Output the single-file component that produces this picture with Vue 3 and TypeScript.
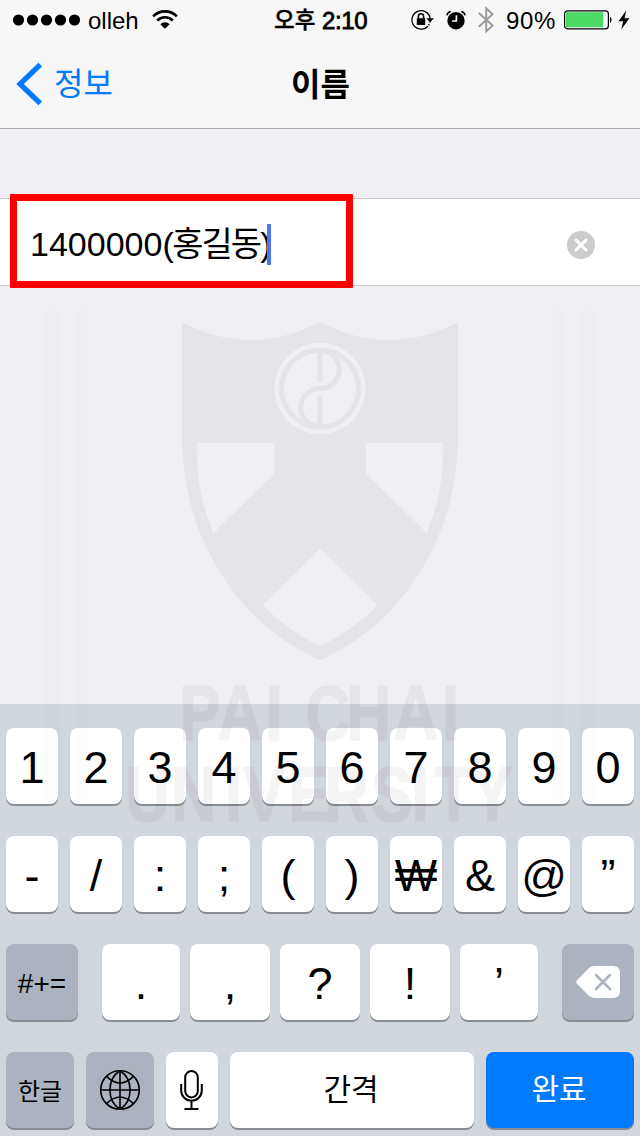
<script setup lang="ts">
interface Key {
  label: string
  width: number
}

interface Run {
  text: string
  kind: string
}

const deviceName: Run[] = [
  { text: '1400000', kind: 'number' },
  { text: '(', kind: 'paren' },
  { text: '홍길동', kind: 'korean' },
  { text: ')', kind: 'paren' },
]
const digits: string[] = ['1', '2', '3', '4', '5', '6', '7', '8', '9', '0']
const symbols: string[] = ['-', '/', ':', ';', '(', ')', '₩', '&', '@', '”']
const punctuation: Key[] = [
  { label: '.', width: 78 },
  { label: ',', width: 80 },
  { label: '?', width: 80 },
  { label: '!', width: 80 },
  { label: '’', width: 78 },
]

// The crest lettering is condensed horizontally, so pen positions are divided by the same factor.
const condense = 0.8
const pen = (xs: number[]): string => xs.map((x) => (x / condense).toFixed(1)).join(' ')
const firstLine = pen([179.5, 217.5, 265.5, 295, 305.5, 346.5, 393.5, 442])
const secondLine = pen([125.5, 171.5, 225, 243.5, 288.5, 324.5, 371.5, 411.5, 435, 471.5])
</script>

<template>
  <div class="screen">
    <header class="top">
      <div class="status">
        <div class="status-left">
          <svg class="dots" width="70" height="12" viewBox="0 0 70 12">
            <circle v-for="n in 5" :key="n" :cx="n * 14 - 7.5" cy="6" r="5.6" />
          </svg>
          <span class="carrier">olleh</span>
          <svg class="wifi" width="26" height="20" viewBox="0 0 26 20">
            <path d="M1.2 6.4 A16.4 16.4 0 0 1 24.8 6.4" />
            <path d="M5.2 10.6 A10.8 10.8 0 0 1 20.8 10.6" />
            <path class="solid" d="M8.4 14.2 A6.4 6.4 0 0 1 17.6 14.2 L13 18.8 Z" />
          </svg>
        </div>
        <div class="clock"><span class="ko">오후</span><span class="digits">2:10</span></div>
        <div class="status-right">
          <svg class="lock" width="25" height="22" viewBox="0 0 25 22">
            <path class="ring" d="M17.9 17.1 A9.2 9.2 0 1 1 20.2 9.4" />
            <path class="ring faint" d="M18.5 16.4 A9.2 9.2 0 0 0 20.2 12" />
            <path d="M16.2 9.2 H24 L20.1 13.3 Z" />
            <rect x="6.8" y="9.2" width="8.4" height="6.8" rx="0.6" />
            <path class="shackle" d="M8.4 9.6 V7.4 A2.6 2.6 0 0 1 13.6 7.4 V9.6" />
          </svg>
          <svg class="alarm" width="20" height="20" viewBox="0 0 20 20">
            <circle cx="10" cy="10.7" r="8.7" />
            <path class="bell" d="M0.9 5.2 A5 5 0 0 1 4.7 1.5 M15.3 1.5 A5 5 0 0 1 19.1 5.2" />
            <path class="hands" d="M10.4 5.2 V11 H6" />
          </svg>
          <svg class="bluetooth" width="16" height="28" viewBox="0 0 16 28">
            <path d="M0.8 7 L14.6 19.6 L8.2 25.4 V2.2 L14.6 8.2 L0.8 20.8" />
          </svg>
          <span class="percent">90%</span>
          <svg class="battery" width="49" height="20" viewBox="0 0 49 20">
            <rect x="0.6" y="0.8" width="43.8" height="18" rx="3" />
            <rect class="charge" x="2" y="2.2" width="37.2" height="15" />
            <path class="cap" d="M46 6.5 A4.4 4.4 0 0 1 46 13.2 Z" />
          </svg>
          <svg class="bolt" width="12" height="20" viewBox="0 0 12 20">
            <path d="M8.2 0.6 L0.5 11.2 H5.2 L3.2 19.4 L11.5 8.2 H6.6 Z" />
          </svg>
        </div>
      </div>
      <nav class="nav">
        <a class="back">
          <svg width="26" height="42" viewBox="0 0 26 42">
            <path d="M23.2 1.6 L3 21 L23.2 40.4" />
          </svg>
          <span>정보</span>
        </a>
        <h1>이름</h1>
      </nav>
    </header>

    <main class="content">
      <div class="field">
        <span class="value"><span v-for="(run, i) in deviceName" :key="i" :class="run.kind">{{ run.text }}</span></span>
        <i class="caret"></i>
        <svg class="clear" width="28" height="28" viewBox="0 0 28 28">
          <circle cx="14" cy="14" r="14" />
          <path d="M9 9 L19 19 M19 9 L9 19" />
        </svg>
        <div class="highlight"></div>
      </div>
    </main>

    <section class="keyboard">
      <div class="row">
        <button v-for="d in digits" :key="d" class="key">{{ d }}</button>
      </div>
      <div class="row">
        <button v-for="s in symbols" :key="s" class="key">{{ s }}</button>
      </div>
      <div class="row spread">
        <button class="key dark mode">#+=</button>
        <div class="group">
          <button v-for="p in punctuation" :key="p.label" class="key" :style="{ width: p.width + 'px' }">{{ p.label }}</button>
        </div>
        <button class="key dark mode glyph">
          <svg width="44" height="32" viewBox="0 0 44 32">
            <path class="tag" d="M0.8 14.4 L12.6 2.4 Q15 0 18.4 0 H37 Q44 0 44 7 V25 Q44 32 37 32 H18.4 Q15 32 12.6 29.6 L0.8 17.6 Q-0.6 16 0.8 14.4 Z" />
            <path class="cross" d="M20 9 L34 23 M34 9 L20 23" />
          </svg>
        </button>
      </div>
      <div class="row">
        <button class="key dark side hangul">한글</button>
        <button class="key dark side glyph">
          <svg class="globe" width="42" height="42" viewBox="0 0 42 42">
            <circle cx="21" cy="21" r="19.3" />
            <path d="M21 1.7 V40.3 M1.7 21 H40.3" />
            <path d="M21 1.7 C7.6 10 7.6 32 21 40.3 M21 1.7 C34.4 10 34.4 32 21 40.3" />
            <path d="M7.6 7.4 Q21 20.6 34.4 7.4 M7.6 34.6 Q21 21.4 34.4 34.6" />
          </svg>
        </button>
        <button class="key glyph">
          <svg class="mic" width="24" height="42" viewBox="0 0 24 42">
            <rect x="5.2" y="2" width="12.6" height="26.4" rx="6.3" />
            <path d="M1.2 15 V21.400 A10.300 10.300 0 0 0 21.800 21.400 V15 M11.500 31.700 V40 M4.500 40 H18.500" />
          </svg>
        </button>
        <button class="key space">간격</button>
        <button class="key done">완료</button>
      </div>
    </section>

    <svg class="crest" width="640" height="560" viewBox="0 300 640 560">
      <g class="bands">
        <path d="M44 310 H62 V800 H44 Z M77 310 H87 V800 H77 Z M553 310 H563 V800 H553 Z M578 310 H596 V800 H578 Z" />
      </g>
      <path
        fill-rule="evenodd"
        d="M182 322 Q251 358 320 322 Q389 358 458 322 V436 C458 535 405 622 320 660.5 C235 622 182 535 182 436 Z
           M197 443 H274.5 V473.5 L213.5 533 C202 506 196 478 197 443 Z
           M443 443 H366 V473.5 L426.5 533 C438 506 444 478 443 443 Z
           M320.3 548.5 L377.7 605.5 Q351 631 320 646.5 Q289 631 262.5 605.5 Z
           M274.3 388.5 A45.7 45.7 0 1 0 365.7 388.5 A45.7 45.7 0 1 0 274.3 388.5 Z"
      />
      <g class="emblem">
        <circle cx="320" cy="388.5" r="38.5" />
        <path d="M320 352 V381.5 M320 395.5 V425" />
        <path d="M320 350.5 A19.300 19 0 0 1 320 388.500 A19.300 19 0 0 0 320 426.500" />
      </g>
      <g class="lettering" :transform="`scale(${condense} 1)`">
        <text :x="firstLine" y="740.5">PAI CHAI</text>
        <text :x="secondLine" y="821.5">UNIVERSITY</text>
      </g>
    </svg>
  </div>
</template>

<style>
body {
  margin: 0;
}
</style>

<style scoped>
.screen {
  position: relative;
  width: 640px;
  height: 1136px;
  overflow: hidden;
  display: flex;
  flex-direction: column;
  background: #efeff4;
  color: #000;
  font-family: 'Liberation Sans', 'Noto Sans CJK KR', sans-serif;
}
svg {
  display: block;
  flex: none;
  overflow: visible;
}
.top {
  box-sizing: border-box;
  height: 129px;
  background: #f7f7f7;
  border-bottom: 1px solid #a7a7ab;
}
.status {
  height: 40px;
  display: grid;
  grid-template-columns: 274px 94px 1fr;
  font-size: 24px;
  line-height: 41px;
}
.status-left,
.status-right,
.clock {
  display: flex;
  align-items: center;
  height: 40px;
  white-space: nowrap;
}
.dots {
  margin-left: 12px;
}
.carrier {
  margin-left: 6px;
  padding-top: 1px;
}
.wifi {
  margin-left: 13px;
}
.wifi path {
  fill: none;
  stroke: #000;
  stroke-width: 2.7;
}
.wifi .solid {
  fill: #000;
  stroke: none;
}
.clock .ko {
  width: 48px;
  padding-top: 1px;
  font-size: 22.5px;
  font-weight: 500;
  -webkit-text-stroke: 0.4px #000;
}
.clock .digits {
  font-size: 24px;
  letter-spacing: -0.4px;
  -webkit-text-stroke: 0.8px #000;
}
.lock {
  margin-left: 42px;
}
.lock .ring {
  fill: none;
  stroke: #000;
  stroke-width: 1.3;
}
.lock .faint {
  stroke-dasharray: 1.5 1.5;
}
.lock .shackle {
  fill: none;
  stroke: #000;
  stroke-width: 1.6;
}
.alarm {
  margin-left: 11px;
}
.alarm .bell {
  fill: none;
  stroke: #000;
  stroke-width: 1.7;
}
.alarm .hands {
  fill: none;
  stroke: #f7f7f7;
  stroke-width: 1.7;
}
.bluetooth {
  margin-left: 12px;
}
.bluetooth path {
  fill: none;
  stroke: #999;
  stroke-width: 1.9;
}
.percent {
  margin-left: 12px;
  padding-top: 1px;
  letter-spacing: 0.6px;
}
.battery {
  margin-left: 8px;
}
.battery rect {
  fill: none;
  stroke: #000;
  stroke-width: 1.2;
}
.battery .charge {
  fill: #4cd964;
  stroke: none;
}
.bolt {
  margin-left: 5px;
}
.nav {
  height: 88px;
  display: grid;
  grid-template-columns: 1fr auto 1fr;
  align-items: center;
}
.back {
  display: flex;
  align-items: center;
  padding-left: 17px;
  color: #007aff;
  font-size: 32px;
  line-height: 86px;
}
.back path {
  fill: none;
  stroke: #007aff;
  stroke-width: 5.2;
}
.back span {
  margin-left: 11px;
}
.nav h1 {
  margin: 0;
  padding: 1px 0 0 1px;
  font-size: 32px;
  line-height: 86px;
  font-weight: 700;
}
.content {
  height: 575px;
  padding-top: 69px;
  box-sizing: border-box;
}
.field {
  position: relative;
  box-sizing: border-box;
  height: 88px;
  display: flex;
  align-items: center;
  padding: 0 45px 0 30px;
  background: #fff;
  border-top: 1px solid #c8c7cc;
  border-bottom: 1px solid #c8c7cc;
}
.value {
  box-sizing: border-box;
  width: 237px;
  padding-top: 4px;
  font-size: 34px;
  line-height: 82px;
  white-space: nowrap;
}
.value .paren {
  letter-spacing: -1.4px;
}
.value .korean {
  letter-spacing: -2px;
}
.caret {
  width: 4px;
  height: 41px;
  margin-top: 5px;
  background: #4f76f2;
}
.clear {
  margin-left: auto;
  margin-top: 6px;
}
.clear circle {
  fill: #ccc;
}
.clear path {
  stroke: #fff;
  stroke-width: 3;
  stroke-linecap: round;
}
.highlight {
  position: absolute;
  left: 10px;
  top: -5px;
  box-sizing: border-box;
  width: 343px;
  height: 94px;
  border: 7px solid #f00;
  border-radius: 1px;
}
.keyboard {
  flex: 1;
  display: flex;
  flex-direction: column;
  gap: 32px;
  padding: 24px 6px 0;
  background: #d1d5dc;
}
.row {
  display: flex;
  gap: 12px;
  height: 76px;
}
.spread {
  justify-content: space-between;
}
.group {
  display: flex;
  gap: 10px;
}
.key {
  box-sizing: border-box;
  flex: none;
  display: flex;
  justify-content: center;
  align-items: center;
  width: 52px;
  height: 76px;
  margin: 0;
  padding: 3px 0 0;
  border: 0;
  border-radius: 8px;
  background: #fff;
  box-shadow: 0 2px 0 #898c90;
  color: #000;
  font-family: inherit;
  font-size: 45px;
  line-height: 73px;
  white-space: nowrap;
}
.dark {
  background: #acb3be;
}
.mode {
  width: 72px;
  padding-top: 2px;
  font-size: 28px;
}
.side {
  width: 68px;
}
.key.glyph {
  padding-top: 0;
}
.key.hangul {
  padding-top: 2px;
  font-size: 24px;
}
.key.space {
  width: 244px;
  padding: 0 2px 2px 0;
  font-size: 30px;
}
.key.done {
  width: 148px;
  padding: 0 2px 2px 0;
  background: #007aff;
  color: #fff;
  font-size: 30px;
}
.tag {
  fill: #fff;
}
.cross {
  fill: none;
  stroke: #acb3be;
  stroke-width: 2.6;
  stroke-linecap: round;
}
.globe * {
  fill: none;
  stroke: #000;
  stroke-width: 1.6;
}
.mic * {
  fill: none;
  stroke: #000;
  stroke-width: 2;
}
.crest {
  position: absolute;
  left: 0;
  top: 300px;
  pointer-events: none;
  fill: #000;
  opacity: 0.038;
}
.crest .bands {
  opacity: 0.12;
}
.emblem * {
  fill: none;
  stroke: #000;
  stroke-width: 5;
}
.lettering text {
  font-family: 'Liberation Sans', sans-serif;
  font-size: 77px;
  font-weight: 700;
  stroke: #000;
  stroke-width: 1.5px;
}
</style>
